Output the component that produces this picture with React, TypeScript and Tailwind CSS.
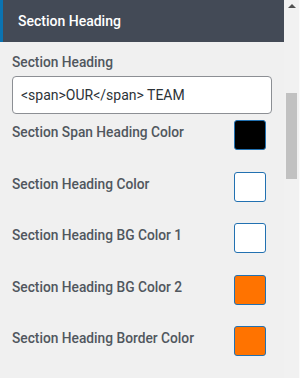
const rows = [
  { label: "Section Span Heading Color", color: "bg-black" },
  { label: "Section Heading Color", color: "bg-white" },
  { label: "Section Heading BG Color 1", color: "bg-white" },
  { label: "Section Heading BG Color 2", color: "bg-[#ff7300]" },
  { label: "Section Heading Border Color", color: "bg-[#ff7300]" },
];

function ColorRow({ label, color }: { label: string; color: string }) {
  return (
    <div className="flex items-start justify-between h-[51.5px] pr-[18px]">
      <span className="mt-[2px] text-[13.75px] leading-[20px] font-medium text-[#50575e]">{label}</span>
      <div className={`w-[32px] h-[30px] rounded-[3px] border border-[#2271b1] ${color}`}></div>
    </div>
  );
}

export default function App() {
  return (
    <div className="flex w-[300px] h-[378px] overflow-hidden bg-[#f0f0f0]" style={{ fontFamily: "Roboto, 'Noto Sans', sans-serif" }}>
      <div className="flex flex-col w-[284px]">
        {/* panel header */}
        <div className="flex items-center h-[42px] bg-[#434a56] border-l-[3px] border-[#0a73b1] pl-[15px]">
          <span className="text-[14px] font-medium text-white">Section Heading</span>
        </div>

        <div className="flex flex-col pl-[12px] pt-[10px]">
          <label className="text-[13.75px] leading-[20px] font-medium text-[#50575e]">Section Heading</label>
          <div className="mt-[4px] mr-[12px] h-[38px] flex items-center rounded-[4px] border border-[#8c8f94] bg-white px-[8px] text-[14px] text-[#2c3338]">
            &lt;span&gt;OUR&lt;/span&gt; TEAM
          </div>
          <div className="flex flex-col mt-[6px]">
            {rows.map((r, i) => (
              <ColorRow key={i} label={r.label} color={r.color} />
            ))}
          </div>
        </div>
      </div>

      {/* scrollbar */}
      <div className="flex flex-col items-center w-[16px] bg-[#f1f1f1] border-r border-[#fafafa]">
        <div className="mt-[4px] w-0 h-0 border-l-[4px] border-r-[4px] border-b-[4px] border-l-transparent border-r-transparent border-b-[#505050]"></div>
        <div className="mt-[85px] w-[11px] h-[86px] bg-[#c1c1c1]"></div>
      </div>
    </div>
  );
}
